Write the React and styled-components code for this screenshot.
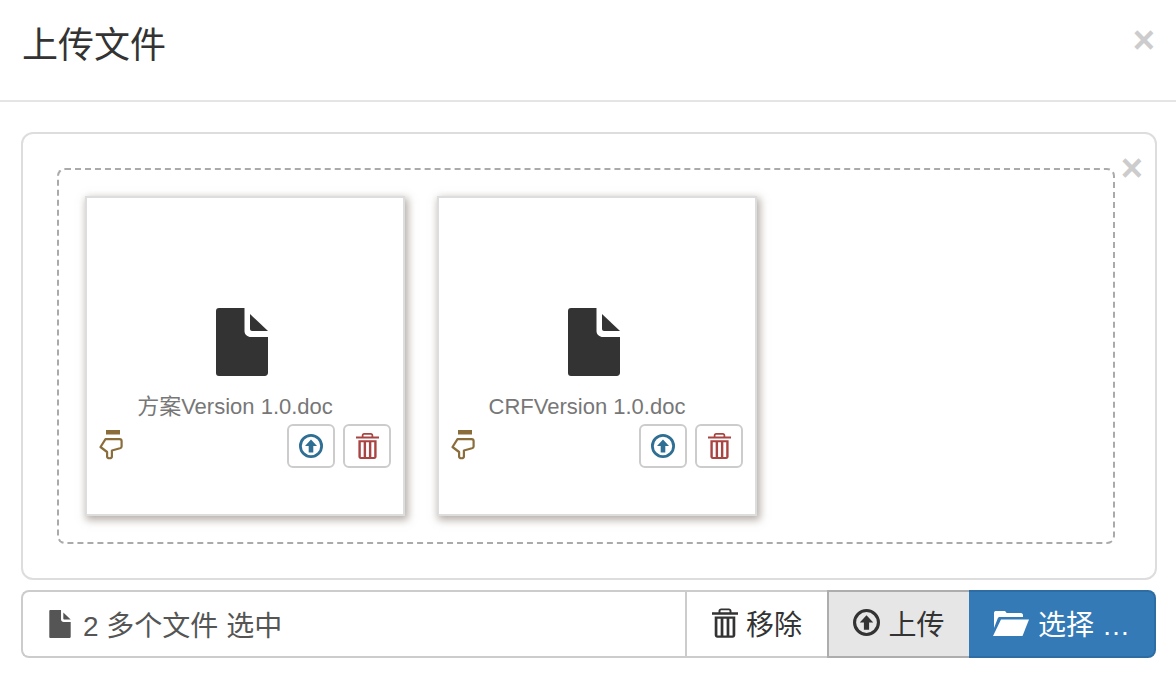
import styled, { createGlobalStyle } from 'styled-components'

const FONT = `"Liberation Sans", "Noto Sans CJK SC", sans-serif`

const GlobalStyle = createGlobalStyle`
  html, body { margin: 0; padding: 0; background: #fff; }
  * { box-sizing: border-box; }
  body { font-family: ${FONT}; color: #333; }
`

const FileIcon = ({ className }) => (
  <svg className={className} viewBox="0 0 52 68" fill="currentColor">
    <path d="M3 0H28.500V23C28.500 26.500 31.500 29 35 29H52V65C52 67 50 68 49 68H3C1 68 0 67 0 65V3C0 1 1 0 3 0Z" />
    <path d="M34 6L52 23H36C35 23 34 22 34 21Z" />
  </svg>
)

const TrashIcon = ({ className }) => (
  <svg className={className} viewBox="0 0 24 27" fill="currentColor">
    <path d="M8.500 0H15.500C17 0 18 1 18 2.500V3.500H24V5.800H0V3.500H6V2.500C6 1 7 0 8.500 0ZM8.500 1.800C8 1.800 7.800 2 7.800 2.500V3.500H16.200V2.500C16.200 2 16 1.800 15.500 1.800Z" fillRule="evenodd" />
    <path d="M2.500 7.500H21.500V24.500C21.500 26 20.500 27 19 27H5C3.500 27 2.500 26 2.500 24.500ZM5 9.500V25H8V9.500ZM10.500 9.500V25H13.500V9.500ZM16 9.500V25H19V9.500Z" fillRule="evenodd" />
  </svg>
)

const UploadIcon = ({ className }) => (
  <svg className={className} viewBox="0 0 26 26" fill="currentColor">
    <path d="M13 0A13 13 0 1 1 13 26A13 13 0 1 1 13 0ZM13 3A10 10 0 1 0 13 23A10 10 0 1 0 13 3Z" fillRule="evenodd" />
    <path d="M13 6L19.500 13H15.500V20H10.500V13H6.500Z" />
  </svg>
)

const FolderIcon = ({ className }) => (
  <svg className={className} viewBox="0 0 36 26" fill="currentColor">
    <path d="M1 3C1 1.500 2 1 3 1H11C12 1 13 1.500 13.500 3H28C29 3 30 4 30 5V7H7C5.500 7 5 7.500 4.500 9L1 18Z" />
    <path d="M8 9.500H36L29.500 26H0Z" />
  </svg>
)

const HandIcon = ({ className }) => (
  <svg className={className} viewBox="0 0 24 31" fill="none" stroke="currentColor" strokeWidth="2.200" strokeLinejoin="round">
    <rect x="7" y="0" width="14" height="4.500" fill="currentColor" stroke="none" />
    <path d="M6.500 9.100H20.500C21.800 9.100 22.600 10 22.600 11V16.500C22.600 17.500 22 18 21 18.300L12.900 20.500V26.500C12.900 28.800 8.100 28.800 8.100 26.500V22L1.500 17Z" />
  </svg>
)

const FileActions = () => (
  <ActionGroup>
    <ActionButton><ActionUpload /></ActionButton>
    <ActionButton><ActionTrash /></ActionButton>
  </ActionGroup>
)

const FileCard = ({ name }) => (
  <Card>
    <CardIcon />
    <CardName>{name}</CardName>
    <CardFooter>
      <Hand />
      <FileActions />
    </CardFooter>
  </Card>
)

const App = () => (
  <>
    <GlobalStyle />
    <Header>
      <Title>上传文件</Title>
      <HeaderClose>×</HeaderClose>
    </Header>
    <Body>
      <Panel>
        <PanelClose>×</PanelClose>
        <DropZone>
          <FileCard name="方案Version 1.0.doc" />
          <FileCard name="CRFVersion 1.0.doc" />
        </DropZone>
      </Panel>
      <InputGroup>
        <Caption>
          <CaptionIcon />
          2 多个文件 选中
        </Caption>
        <ToolButton $width={142}>
          <ToolTrash />
          移除
        </ToolButton>
        <ToolButton $width={142} $active>
          <ToolUpload />
          上传
        </ToolButton>
        <BrowseButton>
          <ToolFolder />
          选择 …
        </BrowseButton>
      </InputGroup>
    </Body>
  </>
)

export default App

const Header = styled.header`
  height: 102px;
  padding: 0 22px;
  display: flex;
  align-items: center;
  justify-content: space-between;
  border-bottom: 2px solid #e5e5e5;
`
const Title = styled.h4`
  margin: 0 0 8px;
  font-size: 36px;
  font-weight: 400;
  line-height: 1;
`
const HeaderClose = styled.span`
  position: absolute;
  top: 18px;
  right: 21px;
  font-size: 38px;
  font-weight: 700;
  line-height: 1.2;
  color: #ccc;
`
const Body = styled.main`
  padding: 30px 19px 0 21px;
`
const Panel = styled.section`
  position: relative;
  height: 448px;
  padding: 34px 40px 34px 34px;
  border: 2px solid #ddd;
  border-radius: 12px;
`
const PanelClose = styled(HeaderClose)`
  top: 12px;
  right: 12px;
`
const DropZone = styled.div`
  height: 376px;
  padding: 26px;
  display: flex;
  gap: 32px;
  border: 2px dashed #aaa;
  border-radius: 8px;
`
const Card = styled.div`
  width: 320px;
  height: 320px;
  padding: 0 12px;
  display: flex;
  flex-direction: column;
  align-items: center;
  border: 2px solid #ddd;
  box-shadow: 2px 3px 8px 1px rgba(120, 105, 95, 0.55);
  background: #fff;
`
const CardIcon = styled(FileIcon)`
  width: 52px;
  height: 68px;
  margin: 110px 6px 0 0;
  flex: none;
  color: #333;
`
const CardName = styled.div`
  margin: 16px 20px 0 0;
  font-size: 22px;
  line-height: 30px;
  color: #777;
  white-space: nowrap;
`
const CardFooter = styled.div`
  align-self: stretch;
  display: flex;
  justify-content: space-between;
  align-items: flex-start;
  margin-top: 2px;
`
const Hand = styled(HandIcon)`
  width: 24px;
  height: 31px;
  margin-top: 6px;
  color: #8a6d3b;
`
const ActionGroup = styled.div`
  display: flex;
  gap: 8px;
`
const ActionButton = styled.button`
  width: 48px;
  height: 44px;
  padding: 0;
  display: flex;
  align-items: center;
  justify-content: center;
  border: 2px solid #ccc;
  border-radius: 6px;
  background: #fff;
`
const ActionUpload = styled(UploadIcon)`
  width: 24px;
  height: 24px;
  color: #2e6f93;
`
const ActionTrash = styled(TrashIcon)`
  width: 23px;
  height: 26px;
  color: #a94442;
`
const InputGroup = styled.div`
  margin: 10px 1px 0 0;
  height: 68px;
  display: flex;
`
const Caption = styled.div`
  flex: 1;
  display: flex;
  align-items: center;
  padding-left: 26px;
  gap: 12px;
  white-space: pre;
  font-size: 28px;
  color: #555;
  border: 2px solid #ccc;
  border-right: 0;
  border-radius: 8px 0 0 8px;
`
const CaptionIcon = styled(FileIcon)`
  width: 22px;
  height: 28px;
`
const ToolButton = styled.button`
  flex: none;
  width: ${({ $width }) => $width}px;
  display: flex;
  align-items: center;
  justify-content: center;
  gap: 8px;
  padding: 0 0 3px;
  font: 28px ${FONT};
  color: #333;
  background: ${({ $active }) => ($active ? '#e6e6e6' : '#fff')};
  border: 2px solid ${({ $active }) => ($active ? '#adadad' : '#ccc')};
  border-right: 0;
`
const ToolTrash = styled(TrashIcon)`
  width: 26px;
  height: 30px;
`
const ToolUpload = styled(UploadIcon)`
  width: 27px;
  height: 27px;
`
const BrowseButton = styled.button`
  flex: none;
  width: 187px;
  display: flex;
  align-items: center;
  justify-content: center;
  gap: 9px;
  padding: 0 0 3px;
  font: 28px ${FONT};
  color: #fff;
  background: #337ab7;
  border: 2px solid #2e6da4;
  border-left: 0;
  border-radius: 0 8px 8px 0;
`
const ToolFolder = styled(FolderIcon)`
  width: 36px;
  height: 26px;
`
